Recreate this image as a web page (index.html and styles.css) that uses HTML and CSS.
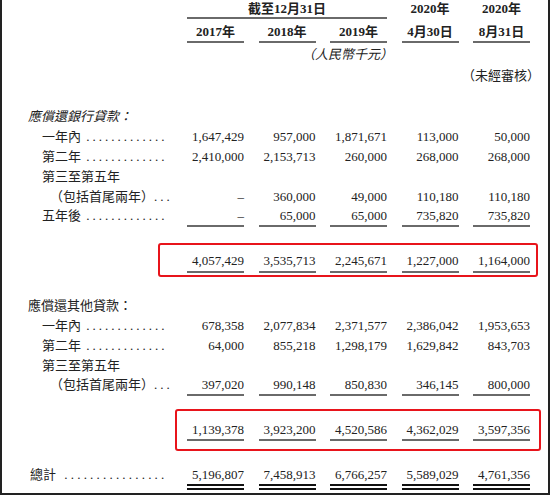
FILE: index.html
```html
<!DOCTYPE html>
<html lang="zh-Hant">
<head>
<meta charset="utf-8">
<link rel="stylesheet" href="styles.css">
</head>
<body>
<div class="page">
  <div class="row hdr1">
    <div class="head span-3 ruled">截至12月31日</div>
    <div class="head c5">2020年</div>
    <div class="head c6">2020年</div>
  </div>
  <div class="row hdr2">
    <div class="head c2 ruled">2017年</div>
    <div class="head c3 ruled">2018年</div>
    <div class="head c4 ruled">2019年</div>
    <div class="head c5 ruled">4月30日</div>
    <div class="head c6 ruled">8月31日</div>
  </div>
  <div class="row unit">
    <div class="note">（人民幣千元）</div>
  </div>
  <div class="row unaudited">
    <div class="note2">（未經審核）</div>
  </div>

  <div class="row sec">
    <div class="label lv0 italic">應償還銀行貸款：</div>
  </div>
  <div class="row item">
    <div class="label lv1"><span>一年內</span><span class="lead">.............</span></div>
    <div class="num">1,647,429</div><div class="num">957,000</div><div class="num">1,871,671</div><div class="num">113,000</div><div class="num">50,000</div>
  </div>
  <div class="row item">
    <div class="label lv1"><span>第二年</span><span class="lead">.............</span></div>
    <div class="num">2,410,000</div><div class="num">2,153,713</div><div class="num">260,000</div><div class="num">268,000</div><div class="num">268,000</div>
  </div>
  <div class="row item">
    <div class="label lv1"><span>第三至第五年</span></div>
  </div>
  <div class="row item">
    <div class="label lv2"><span>（包括首尾兩年）</span><span class="lead">...</span></div>
    <div class="num">–</div><div class="num">360,000</div><div class="num">49,000</div><div class="num">110,180</div><div class="num">110,180</div>
  </div>
  <div class="row item last">
    <div class="label lv1"><span>五年後</span><span class="lead">.............</span></div>
    <div class="num ul">–</div><div class="num ul">65,000</div><div class="num ul">65,000</div><div class="num ul">735,820</div><div class="num ul">735,820</div>
  </div>
  <div class="row total t1">
    <div class="label"></div>
    <div class="num ul">4,057,429</div><div class="num ul">3,535,713</div><div class="num ul">2,245,671</div><div class="num ul">1,227,000</div><div class="num ul">1,164,000</div>
  </div>

  <div class="row sec sec2">
    <div class="label lv0">應償還其他貸款：</div>
  </div>
  <div class="row item">
    <div class="label lv1"><span>一年內</span><span class="lead">.............</span></div>
    <div class="num">678,358</div><div class="num">2,077,834</div><div class="num">2,371,577</div><div class="num">2,386,042</div><div class="num">1,953,653</div>
  </div>
  <div class="row item">
    <div class="label lv1"><span>第二年</span><span class="lead">.............</span></div>
    <div class="num">64,000</div><div class="num">855,218</div><div class="num">1,298,179</div><div class="num">1,629,842</div><div class="num">843,703</div>
  </div>
  <div class="row item">
    <div class="label lv1"><span>第三至第五年</span></div>
  </div>
  <div class="row item last">
    <div class="label lv2"><span>（包括首尾兩年）</span><span class="lead">...</span></div>
    <div class="num ul">397,020</div><div class="num ul">990,148</div><div class="num ul">850,830</div><div class="num ul">346,145</div><div class="num ul">800,000</div>
  </div>
  <div class="row total t2">
    <div class="label"></div>
    <div class="num ul">1,139,378</div><div class="num ul">3,923,200</div><div class="num ul">4,520,586</div><div class="num ul">4,362,029</div><div class="num ul">3,597,356</div>
  </div>

  <div class="row grand">
    <div class="label lvg"><span>總計</span><span class="lead wide">................</span></div>
    <div class="num dbl">5,196,807</div><div class="num dbl">7,458,913</div><div class="num dbl">6,766,257</div><div class="num dbl">5,589,029</div><div class="num dbl">4,761,356</div>
  </div>
</div>
</body>
</html>
```

FILE: styles.css
```css
html, body {
  margin: 0;
  padding: 0;
  background: #ffffff;
  overflow: hidden;
}

.page {
  box-sizing: border-box;
  width: 550px;
  height: 495px;
  border-left: 2px solid #222;
  border-right: 2px solid #222;
  border-bottom: 2px solid #222;
  font-family: "Liberation Serif", "Noto Sans CJK TC", serif;
  font-size: 13px;
  color: #222;
}

.row {
  display: grid;
  grid-template-columns: 170.5px repeat(5, 57px);
  column-gap: 14.5px;
  position: relative;
}

.head {
  font-weight: bold;
  text-align: center;
  white-space: nowrap;
}

.ruled { border-bottom: 2px solid #6a6a6a; }

.c2 { grid-column: 2; }
.c3 { grid-column: 3; }
.c4 { grid-column: 4; }
.c5 { grid-column: 5; }
.c6 { grid-column: 6; }
.span-3 { grid-column: 2 / 5; }

.hdr1 { line-height: 17px; }
.hdr2 { line-height: 18px; padding-top: 4px; }

.unit { line-height: 24px; }
.unaudited { line-height: 18px; }

.note {
  grid-column: 2 / 5;
  text-align: right;
  font-style: italic;
  white-space: nowrap;
  margin-right: -6px;
}

.note2 {
  grid-column: 5 / 7;
  text-align: right;
  white-space: nowrap;
  margin-right: -10px;
}

.sec { line-height: 20px; padding-top: 22px; }
.sec2 { padding-top: 23px; }
.item { line-height: 20px; }
.item.last { line-height: 18px; }

.label {
  grid-column: 1;
  display: flex;
  justify-content: space-between;
  white-space: nowrap;
  padding-right: 5px;
}

.lv0 { padding-left: 26px; }
.lv1 { padding-left: 40px; }
.lv2 { padding-left: 48px; }
.lvg { padding-left: 28px; }

.italic { font-style: italic; }

.lead {
  letter-spacing: 3px;
}

.lead.wide { letter-spacing: 3.2px; }

.num {
  text-align: right;
  white-space: nowrap;
}

.ul { border-bottom: 2px solid #6a6a6a; }

.total { line-height: 20px; padding-top: 24px; }
.t2 { line-height: 18px; padding-top: 25px; }

.total::after {
  content: "";
  position: absolute;
  box-sizing: border-box;
  border: 2px solid #e8141b;
  border-radius: 3px;
}

.t1::after { left: 156px; top: 16px; width: 380px; height: 34px; }
.t2::after { left: 173px; top: 13px; width: 366px; height: 42px; }

.grand { line-height: 19px; padding-top: 24px; }

.dbl { border-bottom: 6px double #111; }
```
